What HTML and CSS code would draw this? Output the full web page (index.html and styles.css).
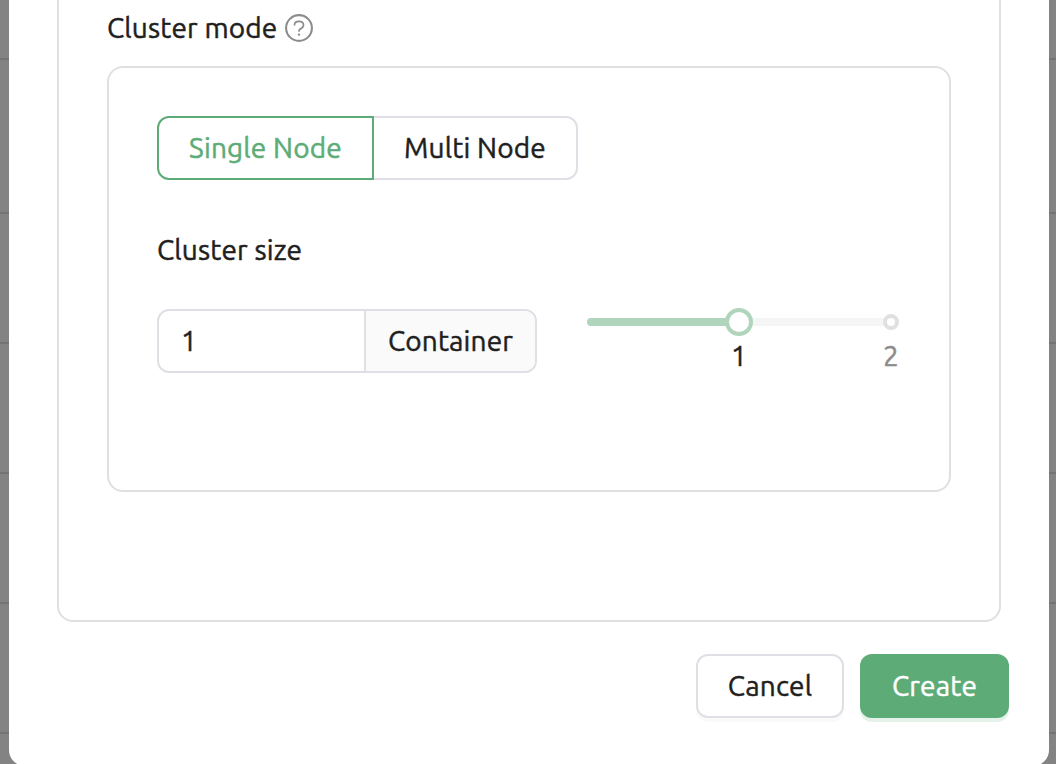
FILE: index.html
```html
<!DOCTYPE html>
<html lang="en">
<head>
<meta charset="utf-8">
<title>Create cluster</title>
<link rel="stylesheet" href="styles.css">
</head>
<body>
<div class="backdrop">
  <main class="modal">
    <section class="panel">
      <div class="label-row">
        <span class="text t-mode">Cluster mode</span>
        <svg class="help" viewBox="0 0 28 28" fill="none" stroke="#8c8c8c">
          <circle cx="14" cy="14" r="12.9" stroke-width="2.1"/>
          <path d="M9.500 11.500V11c0-2.100 1.900-3.600 4.500-3.600s4.500 1.500 4.500 3.700c0 1.700-1 2.800-2.600 3.500-1.300.5-1.900 1.200-1.900 2.300v.9" stroke-width="1.700"/>
          <circle cx="14" cy="20.600" r="1.200" fill="#8c8c8c" stroke="none"/>
        </svg>
      </div>
      <div class="card">
        <div class="segmented">
          <button class="segment segment-active"><span class="text">Single Node</span></button>
          <button class="segment segment-multi"><span class="text">Multi Node</span></button>
        </div>
        <div class="size-label"><span class="text">Cluster size</span></div>
        <div class="size-row">
          <div class="number-group">
            <div class="number-value">1</div>
            <div class="number-addon"><span class="text">Container</span></div>
          </div>
          <div class="slider">
            <div class="track">
              <div class="track-fill"></div>
              <div class="dot"></div>
              <div class="handle"></div>
            </div>
            <div class="marks"><span class="mark">1</span><span class="mark mark-muted">2</span></div>
          </div>
        </div>
      </div>
    </section>
    <footer class="footer">
      <button class="btn btn-cancel"><span class="text">Cancel</span></button>
      <button class="btn btn-create"><span class="text">Create</span></button>
    </footer>
  </main>
</div>
</body>
</html>
```
FILE: styles.css
```css
* { box-sizing: border-box; }
body {
  margin: 0;
  height: 764px;
  overflow: hidden;
  font: 28px/44px Ubuntu, "Noto Sans", sans-serif;
  -webkit-text-stroke: 0.5px currentColor;
  color: #1f1f1f;
}
button { font: inherit; color: inherit; margin: 0; padding: 0; background: #fff; }
.text { white-space: nowrap; letter-spacing: 0.17px; }
.backdrop {
  height: 764px;
  padding: 0 7px 0 9px;
  background:
    linear-gradient(#747474, #747474) 0 58px / 100% 2px no-repeat,
    linear-gradient(#747474, #747474) 0 212px / 100% 2px no-repeat,
    linear-gradient(#747474, #747474) 0 342px / 100% 2px no-repeat,
    linear-gradient(#747474, #747474) 0 472px / 100% 2px no-repeat,
    linear-gradient(#747474, #747474) 0 602px / 100% 2px no-repeat,
    linear-gradient(#747474, #747474) 0 732px / 100% 2px no-repeat,
    #838383;
}
.modal {
  height: 766px;
  padding: 0 40px 0 48px;
  background: #fff;
  border-radius: 0 0 16px 16px;
}
.panel {
  width: 944px;
  height: 622px;
  padding: 6px 48px 0;
  border: 2px solid #e0e0e0;
  border-top: 0;
  border-radius: 0 0 16px 16px;
}
.label-row { display: flex; align-items: center; height: 44px; gap: 8px; }
.help { width: 28px; height: 28px; }
.label-row .t-mode { width: 170px; }
.card {
  width: 844px;
  height: 426px;
  margin-top: 16px;
  padding: 48px;
  border: 2px solid #e0e0e0;
  border-radius: 16px;
}
.segmented { display: flex; height: 64px; }
.segment {
  display: flex;
  align-items: center;
  justify-content: center;
  height: 64px;
}
.segment-active {
  width: 217px;
  border: 2px solid #5dac78;
  border-radius: 12px 0 0 12px;
  color: #5dac78;
}
.segment-multi {
  width: 204px;
  border: 2px solid #e0dfe6;
  border-left: 0;
  border-radius: 0 12px 12px 0;
}
.size-label { margin-top: 48px; height: 44px; }
.size-row { display: flex; gap: 50px; margin-top: 37px; }
.number-group {
  display: flex;
  width: 380px;
  height: 64px;
  border: 2px solid #e0dfe6;
  border-radius: 12px;
  overflow: hidden;
  line-height: 60px;
}
.number-value { width: 205px; padding-left: 22px; }
.number-addon {
  flex: 1;
  display: flex;
  justify-content: center;
  background: #fafafa;
  border-left: 2px solid #e0dfe6;
}
.slider { width: 304px; padding-top: 9px; }
.track { position: relative; height: 8px; background: #f5f5f5; border-radius: 4px; }
.track-fill { width: 50%; height: 8px; background: #b1d5bc; border-radius: 4px; }
.handle, .dot {
  position: absolute;
  top: 50%;
  transform: translate(-50%, -50%);
  border-radius: 50%;
  background: #fff;
}
.handle { left: 50%; width: 28px; height: 28px; border: 4px solid #b1d5bc; }
.dot { left: 100%; width: 16px; height: 16px; border: 4px solid #e0e0e0; }
.marks { display: flex; justify-content: space-between; margin: 8px -8px 0 144px; }
.mark { width: 16px; text-align: center; }
.mark-muted { color: #8c8c8c; }
.footer { display: flex; justify-content: flex-end; gap: 16px; margin-top: 32px; }
.btn {
  display: flex;
  align-items: center;
  justify-content: center;
  height: 64px;
  border-radius: 12px;
}
.btn-cancel { width: 148px; border: 2px solid #e0dfe6; box-shadow: 0 4px 0 #fafafa; }
.btn-create { width: 149px; border: 0; background: #5dac78; color: #fff; box-shadow: 0 4px 0 #e5f2e9; }
```
